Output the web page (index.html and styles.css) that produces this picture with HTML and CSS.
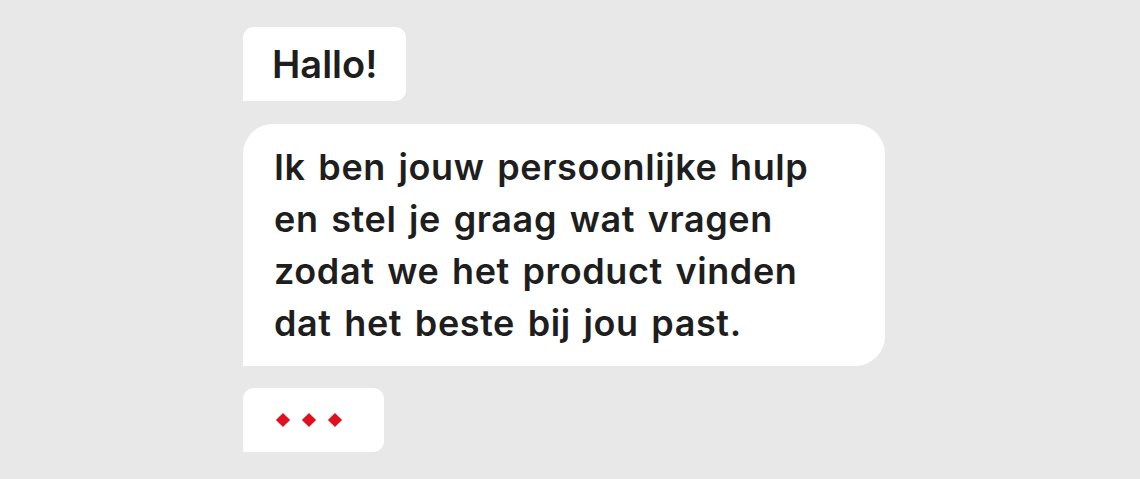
FILE: index.html
```html
<!DOCTYPE html>
<html lang="nl">
<head>
    <meta charset="UTF-8">
    <meta name="viewport" content="width=device-width, initial-scale=1.0">
    <title>Chat</title>
    <link rel="stylesheet" href="styles.css">
</head>
<body>
    <div class="chat">
        <div class="bubble bubble-small">Hallo!</div>
        <div class="bubble bubble-large">
            Ik ben jouw persoonlijke hulp<br>
            en stel je graag wat vragen<br>
            zodat we het product vinden<br>
            dat het beste bij jou past.
        </div>
        <div class="bubble bubble-typing">
            <span class="dot"></span>
            <span class="dot"></span>
            <span class="dot"></span>
        </div>
    </div>
</body>
</html>
```

FILE: styles.css
```css
body {
    margin: 0;
    background-color: #e8e8e9;
    font-family: 'Inter', 'Noto Sans', sans-serif;
    color: #1e1e1e;
}
.chat {
    display: flex;
    flex-direction: column;
    align-items: flex-start;
    gap: 23px;
    padding: 27px 0 0 243px;
}
.bubble {
    background-color: #fff;
    box-sizing: border-box;
}
.bubble-small {
    width: 163px;
    height: 74px;
    padding: 0 0 0 29px;
    display: flex;
    align-items: center;
    font-size: 38px;
    font-weight: 600;
    border-radius: 11px 11px 11px 0;
}
.bubble-large {
    width: 642px;
    height: 242px;
    padding: 17px 0 0 31px;
    font-size: 36px;
    font-weight: 600;
    letter-spacing: 0.6px;
    word-spacing: 3px;
    line-height: 52px;
    border-radius: 30px 30px 30px 0;
}
.bubble-typing {
    width: 141px;
    height: 64px;
    display: flex;
    align-items: center;
    gap: 16px;
    padding-left: 35px;
    border-radius: 11px 11px 11px 0;
    margin-top: -1px;
}
.dot {
    width: 10px;
    height: 10px;
    background-color: #e0101e;
    transform: rotate(45deg);
}
```
